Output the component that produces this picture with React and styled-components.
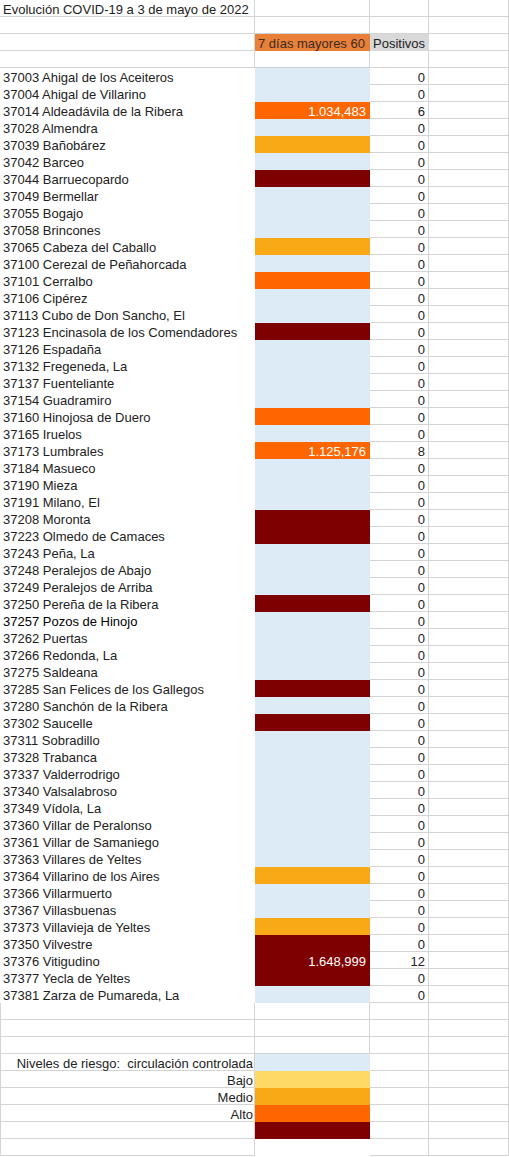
import styled, { createGlobalStyle } from 'styled-components'

// colours taken from the spreadsheet fills
const FILL = {
  blue: '#ddebf7',
  bajo: '#ffd966',
  medio: '#f8a915',
  alto: '#ff6600',
  muyAlto: '#7f0000',
  header: '#e9803a',
  gray: '#d9d9d9',
  white: '#ffffff',
}

const GRID = '#d4d4d4'

const GlobalStyle = createGlobalStyle`
  html, body {
    margin: 0;
    padding: 0;
    background: #fff;
  }
  body {
    font-family: "Liberation Sans", Arial, sans-serif;
    font-size: 13px;
    color: #222;
  }
`

const Sheet = styled.div`
  display: grid;
  grid-template-columns: 255px 115px 59px 80px;
  grid-auto-rows: 17px;
  width: 509px;
`

// one spreadsheet cell, the fill hides its own grid lines like in Excel
const Cell = styled.div`
  box-sizing: border-box;
  height: 17px;
  line-height: 16px;
  padding: 2px 3px 0;
  white-space: pre;
  overflow: visible;
  text-align: ${(p) => p.$align || 'left'};
  color: ${(p) => p.$color || '#222'};
  background: ${(p) => p.$fill || 'transparent'};
  border-right: 1px solid ${(p) => (p.$fill ? 'transparent' : GRID)};
  border-bottom: 1px solid ${(p) => (p.$fill ? 'transparent' : GRID)};
  border-left: ${(p) => (p.$edge ? `1px solid ${GRID}` : '0')};
`

const pueblos = [
  ['37003 Ahigal de los Aceiteros', 'blue'],
  ['37004 Ahigal de Villarino', 'blue'],
  ['37014 Aldeadávila de la Ribera', 'alto', '1.034,483', 6],
  ['37028 Almendra', 'blue'],
  ['37039 Bañobárez', 'medio'],
  ['37042 Barceo', 'blue'],
  ['37044 Barruecopardo', 'muyAlto'],
  ['37049 Bermellar', 'blue'],
  ['37055 Bogajo', 'blue'],
  ['37058 Brincones', 'blue'],
  ['37065 Cabeza del Caballo', 'medio'],
  ['37100 Cerezal de Peñahorcada', 'blue'],
  ['37101 Cerralbo', 'alto'],
  ['37106 Cipérez', 'blue'],
  ['37113 Cubo de Don Sancho, El', 'blue'],
  ['37123 Encinasola de los Comendadores', 'muyAlto'],
  ['37126 Espadaña', 'blue'],
  ['37132 Fregeneda, La', 'blue'],
  ['37137 Fuenteliante', 'blue'],
  ['37154 Guadramiro', 'blue'],
  ['37160 Hinojosa de Duero', 'alto'],
  ['37165 Iruelos', 'blue'],
  ['37173 Lumbrales', 'alto', '1.125,176', 8],
  ['37184 Masueco', 'blue'],
  ['37190 Mieza', 'blue'],
  ['37191 Milano, El', 'blue'],
  ['37208 Moronta', 'muyAlto'],
  ['37223 Olmedo de Camaces', 'muyAlto'],
  ['37243 Peña, La', 'blue'],
  ['37248 Peralejos de Abajo', 'blue'],
  ['37249 Peralejos de Arriba', 'blue'],
  ['37250 Pereña de la Ribera', 'muyAlto'],
  ['37257 Pozos de Hinojo', 'blue'],
  ['37262 Puertas', 'blue'],
  ['37266 Redonda, La', 'blue'],
  ['37275 Saldeana', 'blue'],
  ['37285 San Felices de los Gallegos', 'muyAlto'],
  ['37280 Sanchón de la Ribera', 'blue'],
  ['37302 Saucelle', 'muyAlto'],
  ['37311 Sobradillo', 'blue'],
  ['37328 Trabanca', 'blue'],
  ['37337 Valderrodrigo', 'blue'],
  ['37340 Valsalabroso', 'blue'],
  ['37349 Vídola, La', 'blue'],
  ['37360 Villar de Peralonso', 'blue'],
  ['37361 Villar de Samaniego', 'blue'],
  ['37363 Villares de Yeltes', 'blue'],
  ['37364 Villarino de los Aires', 'medio'],
  ['37366 Villarmuerto', 'blue'],
  ['37367 Villasbuenas', 'blue'],
  ['37373 Villavieja de Yeltes', 'medio'],
  ['37350 Vilvestre', 'muyAlto'],
  ['37376 Vitigudino', 'muyAlto', '1.648,999', 12],
  ['37377 Yecla de Yeltes', 'muyAlto'],
  ['37381 Zarza de Pumareda, La', 'blue'],
]

const leyenda = [
  ['Niveles de riesgo:  circulación controlada', 'blue'],
  ['Bajo', 'bajo'],
  ['Medio', 'medio'],
  ['Alto', 'alto'],
  ['', 'muyAlto'],
]

function BlankRow({ edge }) {
  return (
    <>
      <Cell $edge={edge} />
      <Cell />
      <Cell />
      <Cell />
    </>
  )
}

export default function App() {
  return (
    <>
      <GlobalStyle />
      <Sheet>
        <Cell>Evolución COVID-19 a 3 de mayo de 2022</Cell>
        <Cell />
        <Cell />
        <Cell />

        <BlankRow />

        <Cell />
        <Cell $fill={FILL.header} $color="#3b2a1e">7 días mayores 60</Cell>
        <Cell $fill={FILL.gray}>Positivos</Cell>
        <Cell />

        <BlankRow />

        {pueblos.map(([nombre, nivel, tasa, positivos]) => (
          <Row key={nombre} nombre={nombre} nivel={nivel} tasa={tasa} positivos={positivos} />
        ))}

        <BlankRow edge />
        <BlankRow edge />
        <BlankRow edge />

        {leyenda.map(([texto, nivel]) => (
          <LegendRow key={nivel} texto={texto} nivel={nivel} />
        ))}

        <Cell $edge />
        <Cell $fill={FILL.white} />
        <Cell />
        <Cell />
      </Sheet>
    </>
  )
}

function Row({ nombre, nivel, tasa, positivos = 0 }) {
  // Pozos de Hinojo is typed a shade darker in the original sheet
  const oscuro = nombre.startsWith('37257')
  return (
    <>
      <Cell $fill={FILL.white} $color={oscuro ? '#000' : undefined}>
        {nombre}
      </Cell>
      <Cell $fill={FILL[nivel]} $align="right" $color="#fff">
        {tasa}
      </Cell>
      <Cell $align="right">{positivos}</Cell>
      <Cell />
    </>
  )
}

function LegendRow({ texto, nivel }) {
  return (
    <>
      <Cell $edge $align="right" style={{ paddingRight: 1 }}>
        {texto}
      </Cell>
      <Cell $fill={FILL[nivel]} />
      <Cell />
      <Cell />
    </>
  )
}
